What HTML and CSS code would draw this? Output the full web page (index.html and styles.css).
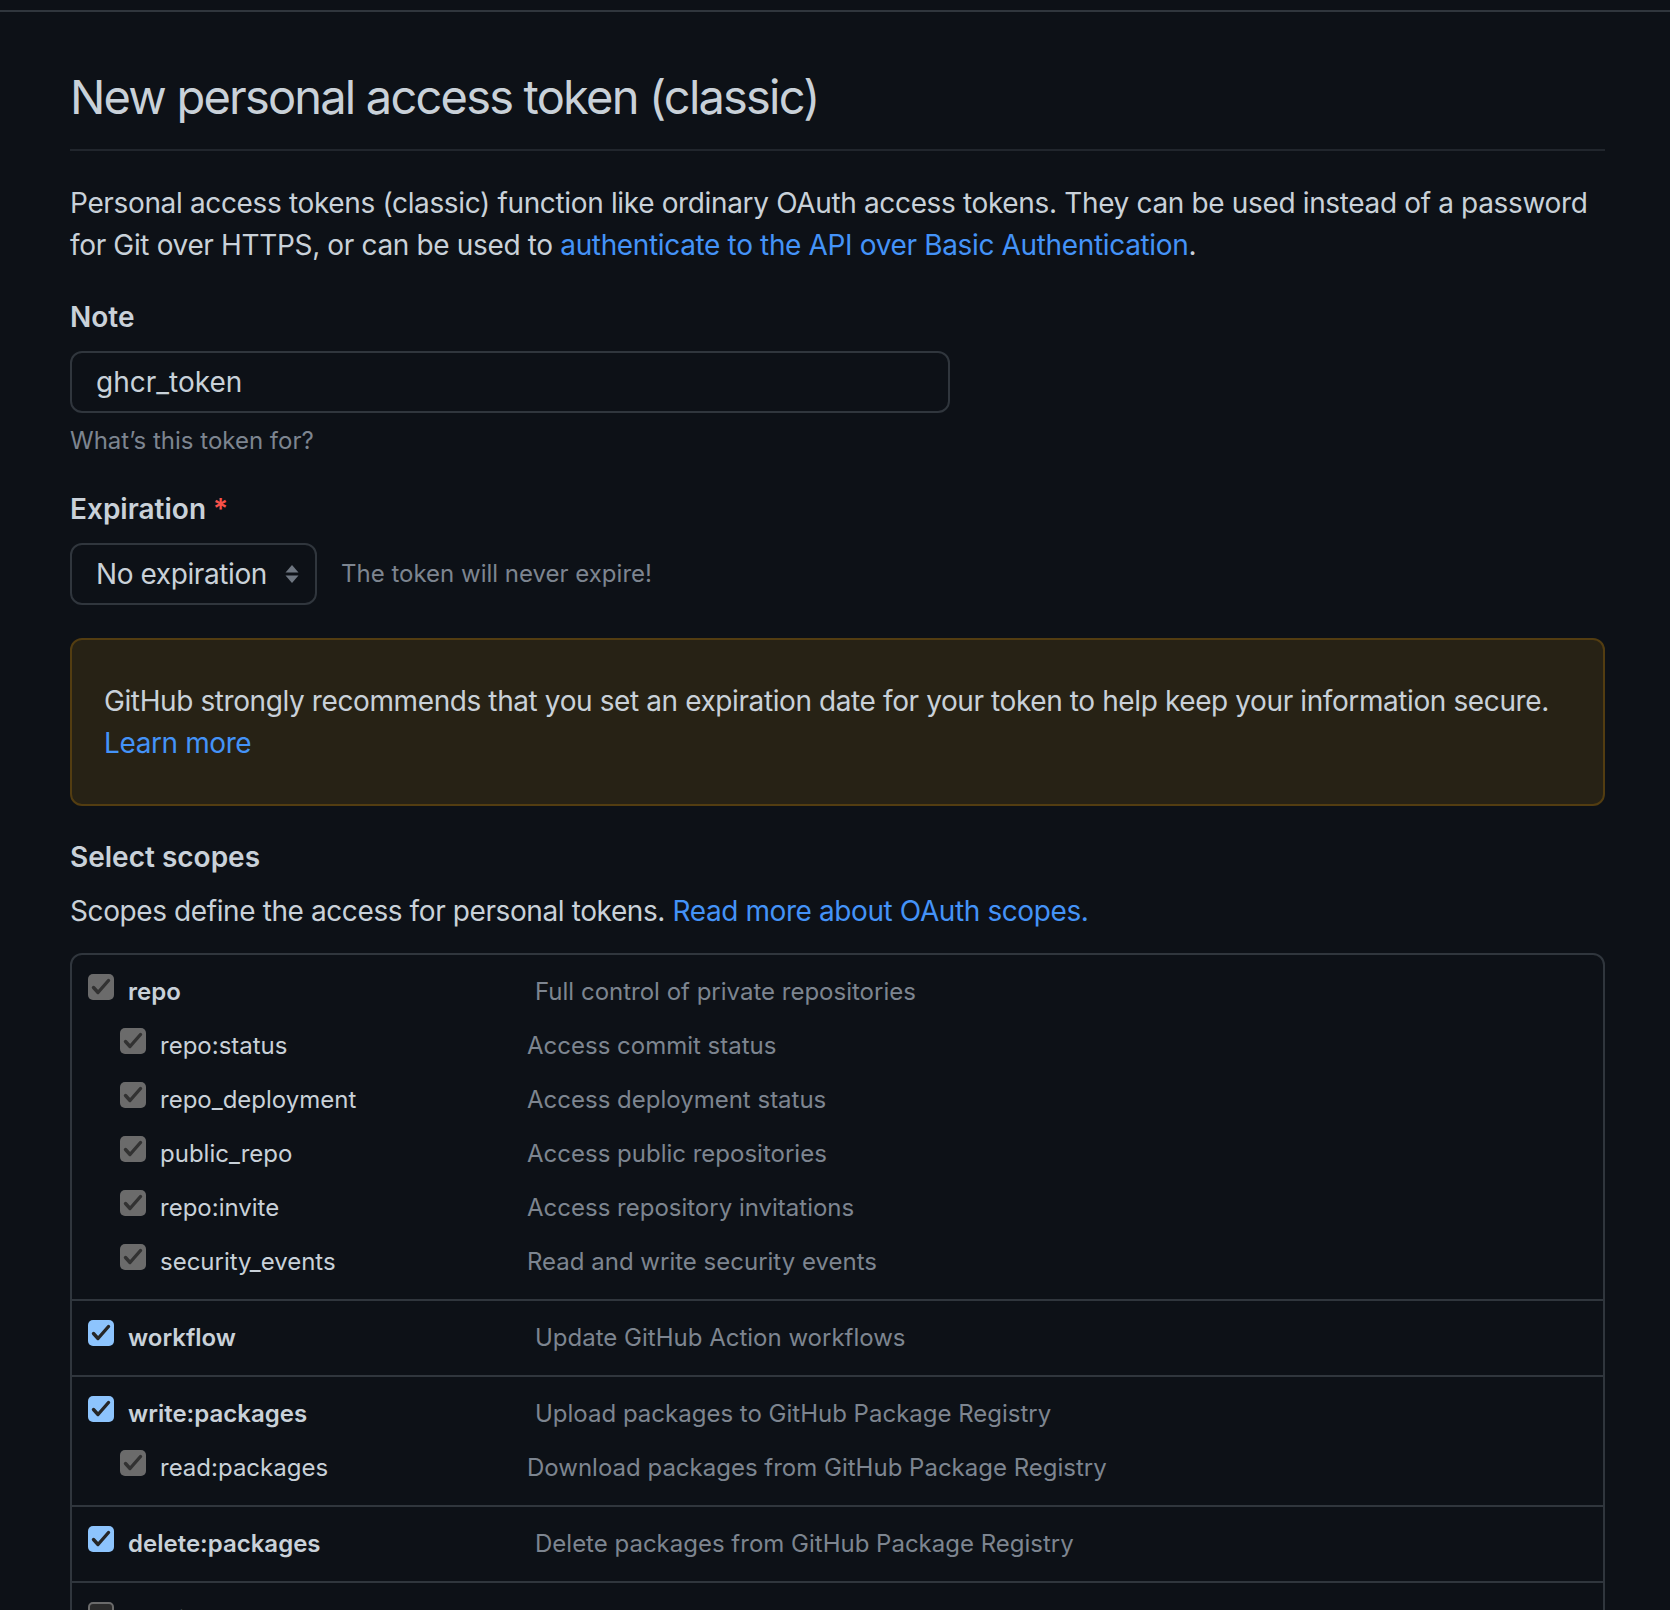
FILE: index.html
```html
<!DOCTYPE html>
<html lang="en">
<head>
<meta charset="utf-8">
<title>New personal access token (classic)</title>
<link rel="stylesheet" href="styles.css">
</head>
<body>
<div class="topbar"></div>
<main class="container">
  <div class="subhead">
    <h2 class="subhead-heading">New personal access token (classic)</h2>
  </div>
  <p class="intro">Personal access tokens (classic) function like ordinary OAuth access tokens. They can be used instead of a password for Git over HTTPS, or can be used to <a href="#" class="link">authenticate to the API over Basic Authentication</a>.</p>

  <label class="form-label label-note">Note</label>
  <input class="form-control" type="text" value="ghcr_token">
  <p class="note">What’s this token for?</p>

  <label class="form-label label-exp">Expiration <span class="required">*</span></label>
  <div class="expiration-row">
    <div class="select">
      <span>No expiration</span>
      <svg class="select-arrows" width="14" height="20" viewBox="0 0 14 20"><polygon points="0.5,8.5 13.5,8.5 7,1" fill="#6e7681"/><polygon points="0.5,11.5 13.5,11.5 7,19" fill="#6e7681"/></svg>
    </div>
    <span class="expiration-note">The token will never expire!</span>
  </div>

  <div class="flash-warn">
    GitHub strongly recommends that you set an expiration date for your token to help keep your information secure.
    <a href="#" class="link flash-link">Learn more</a>
  </div>

  <h3 class="form-label label-scopes">Select scopes</h3>
  <p class="scopes-intro">Scopes define the access for personal tokens. <a href="#" class="link">Read more about OAuth scopes.</a></p>

  <div class="scopes">
    <div class="scope-group">
      <div class="scope-row main">
        <label class="scope-name"><span class="cb cb-gray"><svg viewBox="0 0 26 26" width="26" height="26"><path d="M5.5 13.5 L10 18.5 L20.5 6.5" /></svg></span>repo</label>
        <span class="scope-desc">Full control of private repositories</span>
      </div>
      <div class="scope-row sub">
        <label class="scope-name"><span class="cb cb-gray"><svg viewBox="0 0 26 26" width="26" height="26"><path d="M5.5 13.5 L10 18.5 L20.5 6.5" /></svg></span>repo:status</label>
        <span class="scope-desc">Access commit status</span>
      </div>
      <div class="scope-row sub">
        <label class="scope-name"><span class="cb cb-gray"><svg viewBox="0 0 26 26" width="26" height="26"><path d="M5.5 13.5 L10 18.5 L20.5 6.5" /></svg></span>repo_deployment</label>
        <span class="scope-desc">Access deployment status</span>
      </div>
      <div class="scope-row sub">
        <label class="scope-name"><span class="cb cb-gray"><svg viewBox="0 0 26 26" width="26" height="26"><path d="M5.5 13.5 L10 18.5 L20.5 6.5" /></svg></span>public_repo</label>
        <span class="scope-desc">Access public repositories</span>
      </div>
      <div class="scope-row sub">
        <label class="scope-name"><span class="cb cb-gray"><svg viewBox="0 0 26 26" width="26" height="26"><path d="M5.5 13.5 L10 18.5 L20.5 6.5" /></svg></span>repo:invite</label>
        <span class="scope-desc">Access repository invitations</span>
      </div>
      <div class="scope-row sub">
        <label class="scope-name"><span class="cb cb-gray"><svg viewBox="0 0 26 26" width="26" height="26"><path d="M5.5 13.5 L10 18.5 L20.5 6.5" /></svg></span>security_events</label>
        <span class="scope-desc">Read and write security events</span>
      </div>
    </div>

    <div class="scope-group">
      <div class="scope-row main">
        <label class="scope-name"><span class="cb cb-blue"><svg viewBox="0 0 26 26" width="26" height="26"><path d="M5.5 13.5 L10 18.5 L20.5 6.5" /></svg></span>workflow</label>
        <span class="scope-desc">Update GitHub Action workflows</span>
      </div>
    </div>

    <div class="scope-group">
      <div class="scope-row main">
        <label class="scope-name"><span class="cb cb-blue"><svg viewBox="0 0 26 26" width="26" height="26"><path d="M5.5 13.5 L10 18.5 L20.5 6.5" /></svg></span>write:packages</label>
        <span class="scope-desc">Upload packages to GitHub Package Registry</span>
      </div>
      <div class="scope-row sub">
        <label class="scope-name"><span class="cb cb-gray"><svg viewBox="0 0 26 26" width="26" height="26"><path d="M5.5 13.5 L10 18.5 L20.5 6.5" /></svg></span>read:packages</label>
        <span class="scope-desc">Download packages from GitHub Package Registry</span>
      </div>
    </div>

    <div class="scope-group">
      <div class="scope-row main">
        <label class="scope-name"><span class="cb cb-blue"><svg viewBox="0 0 26 26" width="26" height="26"><path d="M5.5 13.5 L10 18.5 L20.5 6.5" /></svg></span>delete:packages</label>
        <span class="scope-desc">Delete packages from GitHub Package Registry</span>
      </div>
    </div>

    <div class="scope-group">
      <div class="scope-row main">
        <label class="scope-name"><span class="cb cb-empty"></span>admin:org</label>
        <span class="scope-desc">Full control of orgs and teams, read and write org projects</span>
      </div>
    </div>
  </div>
</main>
</body>
</html>
```

FILE: styles.css
```css
html, body {
  margin: 0;
  background: #0d1117;
}

body {
  color: #c9d1d9;
  font-family: Inter, "Noto Sans", "Liberation Sans", sans-serif;
  font-size: 28px;
  line-height: 42px;
}

.topbar {
  height: 10px;
  border-bottom: 2px solid #30363d;
}

.container {
  margin-left: 70px;
  width: 1535px;
}

.subhead {
  margin-top: 49px;
  padding-bottom: 16px;
  border-bottom: 2px solid #21262d;
}

.subhead-heading {
  margin: 0;
  font-size: 47px;
  line-height: 72px;
  font-weight: 400;
  letter-spacing: -1.8px;
}

.intro {
  margin: 31px 0 0;
  letter-spacing: -0.35px;
}

.link {
  color: #4493f8;
  text-decoration: none;
}

.form-label {
  display: block;
  margin: 30px 0 13px;
  font-size: 28px;
  line-height: 42px;
  font-weight: 600;
}

.label-exp {
  margin-top: 29px;
}

.required {
  color: #f85149;
  font-weight: 600;
}

.form-control {
  display: block;
  box-sizing: border-box;
  width: 880px;
  height: 62px;
  margin: 0;
  padding: 0 24px;
  border: 2px solid #30363d;
  border-radius: 12px;
  background: #0d1117;
  color: #c9d1d9;
  font-family: inherit;
  font-size: 28px;
  outline: none;
}

.note {
  margin: 10px 0 0;
  font-size: 24px;
  line-height: 36px;
  color: #7d8590;
}

.expiration-row {
  display: flex;
  align-items: center;
  gap: 24px;
}

.select {
  display: flex;
  align-items: center;
  justify-content: space-between;
  box-sizing: border-box;
  width: 247px;
  height: 62px;
  padding: 0 16px 0 24px;
  border: 2px solid #30363d;
  border-radius: 12px;
  letter-spacing: -0.4px;
}

.select-arrows {
  display: block;
}

.expiration-note {
  font-size: 24px;
  line-height: 36px;
  color: #7d8590;
}

.flash-warn {
  margin-top: 33px;
  padding: 40px 32px;
  border: 2px solid #533d11;
  border-radius: 12px;
  background: #272215;
  letter-spacing: -0.4px;
}

.flash-link {
  display: block;
}

.label-scopes {
  margin: 30px 0 0;
}

.scopes-intro {
  margin: 12px 0 0;
  letter-spacing: -0.4px;
}

.scopes {
  margin-top: 21px;
  border: 2px solid #30363d;
  border-radius: 12px;
}

.scope-group {
  padding: 10px 16px 10px;
}

.scope-group + .scope-group {
  border-top: 2px solid #30363d;
}

.scope-row {
  display: flex;
  align-items: baseline;
  height: 54px;
  line-height: 54px;
}

.scope-name {
  flex: none;
  font-size: 24px;
  white-space: nowrap;
}

.main .scope-name {
  width: 447px;
  font-weight: 600;
}

.scope-row.sub {
  padding-left: 32px;
}

.sub .scope-name {
  width: 407px;
  font-weight: 400;
}

.scope-desc {
  font-size: 24px;
  color: #7d8590;
  white-space: nowrap;
}

.cb {
  display: inline-block;
  box-sizing: border-box;
  width: 26px;
  height: 26px;
  margin-right: 14px;
  border-radius: 5px;
  overflow: hidden;
  vertical-align: baseline;
}

.cb svg {
  display: block;
}

.cb path {
  fill: none;
  stroke-width: 3.4;
  stroke-linecap: round;
  stroke-linejoin: round;
}

.cb-gray {
  background: #6b6b6b;
}

.cb-gray path {
  stroke: #323232;
}

.cb-blue {
  background: #8dc4fd;
}

.cb-blue path {
  stroke: #262626;
}

.cb-empty {
  background: #2b2b2b;
  border: 2px solid #6b6b6b;
}
```
